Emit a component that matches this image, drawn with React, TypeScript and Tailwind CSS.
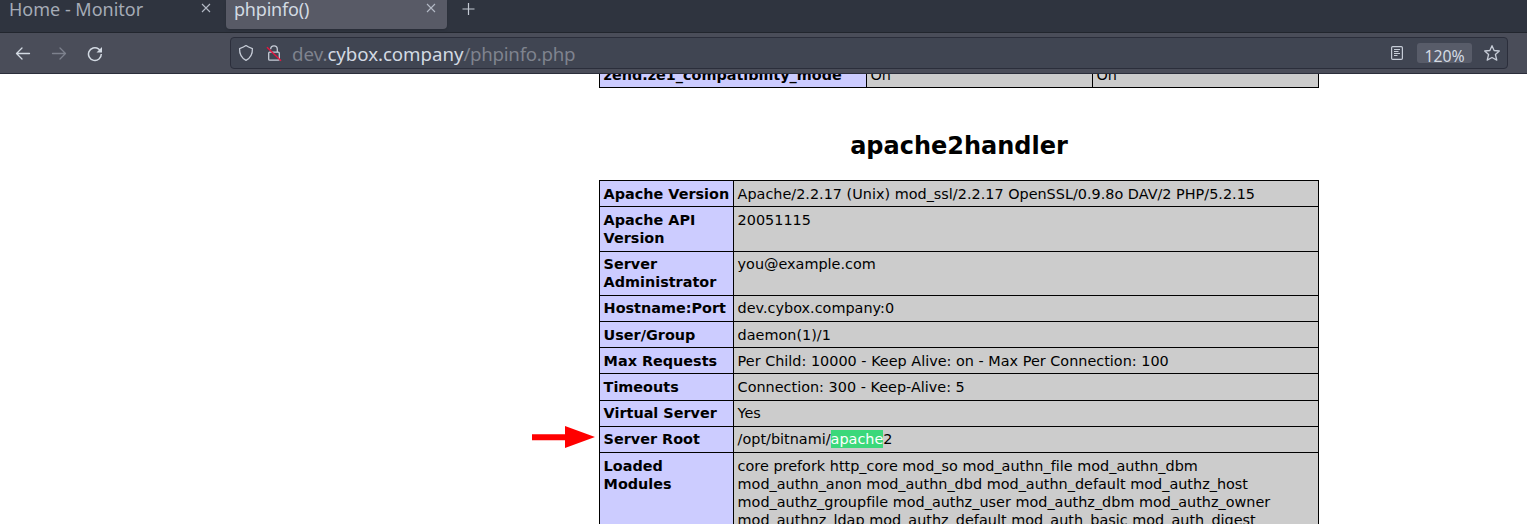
import React from "react";

type Row = { label: string[]; value: React.ReactNode[]; height: string; pad: string };

const rows: Row[] = [
  { label: ["Apache Version"], value: ["Apache/2.2.17 (Unix) mod_ssl/2.2.17 OpenSSL/0.9.8o DAV/2 PHP/5.2.15"], height: "h-[26px]", pad: "pt-1" },
  { label: ["Apache API", "Version"], value: ["20051115"], height: "h-[45px]", pad: "pt-1" },
  { label: ["Server", "Administrator"], value: ["you@example.com"], height: "h-[44px]", pad: "pt-[3px]" },
  { label: ["Hostname:Port"], value: ["dev.cybox.company:0"], height: "h-[26px]", pad: "pt-[3px]" },
  { label: ["User/Group"], value: ["daemon(1)/1"], height: "h-[26px]", pad: "pt-1" },
  { label: ["Max Requests"], value: ["Per Child: 10000 - Keep Alive: on - Max Per Connection: 100"], height: "h-[26px]", pad: "pt-1" },
  { label: ["Timeouts"], value: ["Connection: 300 - Keep-Alive: 5"], height: "h-[27px]", pad: "pt-1" },
  { label: ["Virtual Server"], value: ["Yes"], height: "h-[26px]", pad: "pt-[3px]" },
  {
    label: ["Server Root"],
    value: [
      <>
        /opt/bitnami/<span className="inline-block h-[18px] bg-[#3bd87a] align-top text-white">apache</span>2
      </>,
    ],
    height: "h-[26px]",
    pad: "pt-[3px]",
  },
  {
    label: ["Loaded", "Modules"],
    value: [
      "core prefork http_core mod_so mod_authn_file mod_authn_dbm",
      "mod_authn_anon mod_authn_dbd mod_authn_default mod_authz_host",
      "mod_authz_groupfile mod_authz_user mod_authz_dbm mod_authz_owner",
      "mod_authnz_ldap mod_authz_default mod_auth_basic mod_auth_digest",
    ],
    height: "h-[90px]",
    pad: "pt-1",
  },
];

function Lines({ items }: { items: React.ReactNode[] }) {
  return (
    <>
      {items.map((item, i) => (
        <div key={i}>{item}</div>
      ))}
    </>
  );
}

function Close() {
  return (
    <svg width="10" height="10" viewBox="0 0 10 10" className="shrink-0" stroke="#b4bac6" strokeWidth="1.1">
      <path d="M1 1l8 8M9 1L1 9" />
    </svg>
  );
}

function TabBar() {
  return (
    <div className="flex h-8 shrink-0 items-start bg-[#2f343f] text-[18px] leading-[24px]">
      <div className="flex h-[29px] w-[226px] items-start justify-between pl-[9px] pr-[15px] text-[#a5abb6]">
        <span className="-mt-[3px]">Home - Monitor</span>
        <span className="mt-[3px]"><Close /></span>
      </div>
      <div className="flex h-[29px] w-[221px] items-start justify-between rounded-b-[4px] bg-[#585a66] pl-2 pr-[11px] text-[#d3dae3] shadow-sm">
        <span className="-mt-[3px] tracking-[-0.2px]">phpinfo()</span>
        <span className="mt-[3px]"><Close /></span>
      </div>
      <svg width="14" height="14" viewBox="0 0 14 14" className="ml-[14px] mt-[2px]" stroke="#c4cad4" strokeWidth="1.2">
        <path d="M7.5 1v12M1.5 7h12" />
      </svg>
    </div>
  );
}

function Toolbar() {
  return (
    <div className="flex h-[42px] shrink-0 items-start border-b border-t border-b-[#2b2e3b] border-t-[#22262e] bg-[#4a4d59]">
      <div className="flex w-[230px] items-center gap-5 pl-[15px] pt-[13px]">
        <svg width="16" height="16" viewBox="0 0 16 16" fill="none" stroke="#d3dae3" strokeWidth="1.3" strokeLinecap="round" strokeLinejoin="round">
          <path d="M14.5 7.5H1.5M7 2L1.5 7.5L7 13" />
        </svg>
        <svg width="16" height="16" viewBox="0 0 16 16" fill="none" stroke="#7d818d" strokeWidth="1.3" strokeLinecap="round" strokeLinejoin="round">
          <path d="M1.5 7.5H14.5M9 2L14.5 7.5L9 13" />
        </svg>
        <svg width="16" height="16" viewBox="0 0 16 16" fill="none" stroke="#d3dae3" strokeWidth="1.5">
          <path d="M14.3 8A6.4 6.4 0 1 1 11.5 2.8L13 4.5" />
          <path d="M15 1v5.5H9.5z" fill="#d3dae3" stroke="none" />
        </svg>
      </div>
      <div className="mt-1 flex h-8 w-[1278px] items-center rounded-[4px] border border-[#2b2e3b] bg-[#404552]">
        <svg width="16" height="18" viewBox="0 0 16 18" className="ml-[7px]" fill="none" stroke="#c6ccd7" strokeWidth="1.3" strokeLinejoin="round">
          <path d="M8 1.6C9.8 3 12 3.8 14.4 4.6C14.6 9.5 12.5 14 8 16.3C3.5 14 1.4 9.5 1.6 4.6C4 3.8 6.2 3 8 1.6Z" />
        </svg>
        <svg width="16" height="18" viewBox="0 0 16 18" className="ml-3" fill="none" stroke="#c6ccd7" strokeWidth="1.3">
          <rect x="2.7" y="8.2" width="10.6" height="8" rx="1" />
          <path d="M4.7 5.2a3.3 3.3 0 0 1 6.6 0v3" />
          <path d="M1 3.2l14 13.6" stroke="#e8153f" strokeWidth="1.4" />
        </svg>
        <div className="ml-[10px] mt-[2px] flex-1 text-[18.7px] leading-[26px] text-[#7f838e]">
          dev.<span className="tracking-[-0.05px] text-[#d3dae3]">cybox.company</span>
          <span className="tracking-[-0.27px]">/phpinfo.php</span>
        </div>
        <svg width="14" height="16" viewBox="0 0 14 16" fill="none" stroke="#c6ccd7" strokeWidth="1.2">
          <rect x="1.6" y="1.6" width="10.8" height="12.8" rx="1.2" />
          <path d="M4 4.5h6M4 6.5h4.5M4 8.5h6M4 10.5h3.5" />
        </svg>
        <div className="ml-[13px] h-5 w-[55px] overflow-hidden rounded-[3px] bg-[#585c69] pt-[2px] text-center text-[15.8px] leading-[22px] text-[#d3dae3]">120%</div>
        <svg width="18" height="18" viewBox="0 0 18 18" className="ml-[11px] mr-[6px]" fill="none" stroke="#c6ccd7" strokeWidth="1.3" strokeLinejoin="round">
          <path d="M9 1.7l2.1 4.8 5.2.5-3.9 3.5 1.4 5.6L9 13.5l-4.8 2.6 1.4-5.6L1.7 7l5.2-.5z" />
        </svg>
      </div>
    </div>
  );
}

export default function App() {
  return (
    <div className="flex h-[524px] w-[1527px] flex-col overflow-hidden bg-white font-['Noto_Sans',sans-serif]">
      <TabBar />
      <Toolbar />
      <main className="flex min-h-0 flex-1 justify-center overflow-hidden pl-[391px] pr-0 font-['DejaVu_Sans',sans-serif] text-[14.4px] leading-[18px] text-black">
        <div className="relative h-full w-[720px] shrink-0">
          <div className="flex h-[14px] items-end overflow-hidden border border-t-0 border-black">
            <div className="h-[18px] w-[267px] border-r border-black bg-[#ccccff] pl-[3.5px] font-bold"><div className="-mt-[3px]">zend.ze1_compatibility_mode</div></div>
            <div className="h-[18px] w-[226px] border-r border-black bg-[#cccccc] pl-[3.5px]"><div className="-mt-[3px]">On</div></div>
            <div className="h-[18px] flex-1 bg-[#cccccc] pl-[3.5px]"><div className="-mt-[3px]">On</div></div>
          </div>
          <h2 className="mt-[43px] text-center text-[24px] font-bold leading-[30px]">apache2handler</h2>
          <div className="mt-[19px] border border-black">
            {rows.map((row, i) => (
              <div key={i} className={`flex border-b border-black ${row.height}`}>
                <div className={`w-[134px] whitespace-nowrap border-r border-black bg-[#ccccff] pl-[3.6px] font-bold tracking-[0.005px] ${row.pad}`}>
                  <Lines items={row.label} />
                </div>
                <div className={`flex-1 whitespace-nowrap bg-[#cccccc] pl-[3.6px] tracking-[0.01px] ${row.pad}`}>
                  <Lines items={row.value} />
                </div>
              </div>
            ))}
          </div>
          <svg width="63" height="22" viewBox="0 0 63 22" className="absolute left-[-67px] top-[352px]" fill="#ff0000">
            <path d="M0 8.3h33V0l30 11-30 11v-7.7H0z" />
          </svg>
        </div>
      </main>
    </div>
  );
}
